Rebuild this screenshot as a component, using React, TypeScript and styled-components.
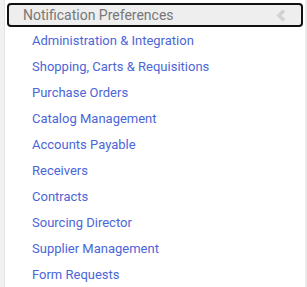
import React from 'react';
import styled, { createGlobalStyle } from 'styled-components';

const GlobalStyle = createGlobalStyle`
  html, body {
    margin: 0;
    padding: 0;
    background: #fff;
  }
  body {
    font-family: Roboto, "Liberation Sans", sans-serif;
  }
`;

const items = [
  'Administration & Integration',
  'Shopping, Carts & Requisitions',
  'Purchase Orders',
  'Catalog Management',
  'Accounts Payable',
  'Receivers',
  'Contracts',
  'Sourcing Director',
  'Supplier Management',
  'Form Requests',
];

const App: React.FC = () => {
  return (
    <>
      <GlobalStyle />
      <Page>
        <Gutter />
        <Panel>
          <Header>
            <HeaderTitle>Notification Preferences</HeaderTitle>
            <Chevron viewBox="0 0 10 13" aria-hidden="true">
              <path d="M8 1.5 L3 6.5 L8 11.5" />
            </Chevron>
          </Header>
          <Menu>
            {items.map((item) => (
              <li key={item}>
                <MenuLink href="#">{item}</MenuLink>
              </li>
            ))}
          </Menu>
        </Panel>
        <RightEdge />
      </Page>
    </>
  );
};

const Page = styled.div`
  display: flex;
  width: 307px;
  height: 287px;
  overflow: hidden;
`;

const Gutter = styled.div`
  width: 4px;
  flex: none;
  background: #f1f1f1;
  border-right: 1px solid #e4e4e4;
`;

const Panel = styled.div`
  flex: 1;
  padding: 3px 2px 0 2px;
`;

const RightEdge = styled.div`
  width: 2px;
  flex: none;
  background: #ececec;
`;

const Header = styled.div`
  display: flex;
  align-items: center;
  justify-content: space-between;
  height: 20px;
  padding: 0 15px 0 14px;
  background: #eeeeee;
  border: 2px solid #111;
  border-radius: 4px;
`;

const HeaderTitle = styled.span`
  font-size: 14px;
  color: #777;
  line-height: 20px;
`;

const Chevron = styled.svg`
  width: 10px;
  height: 13px;
  fill: none;
  stroke: #d2d2d2;
  stroke-width: 3.5;
`;

const Menu = styled.ul`
  list-style: none;
  margin: 0;
  padding: 0 0 0 25px;

  li {
    height: 26px;
    line-height: 26px;
  }
`;

const MenuLink = styled.a`
  font-size: 13px;
  color: #4b66d8;
  text-decoration: none;
`;

export default App;
